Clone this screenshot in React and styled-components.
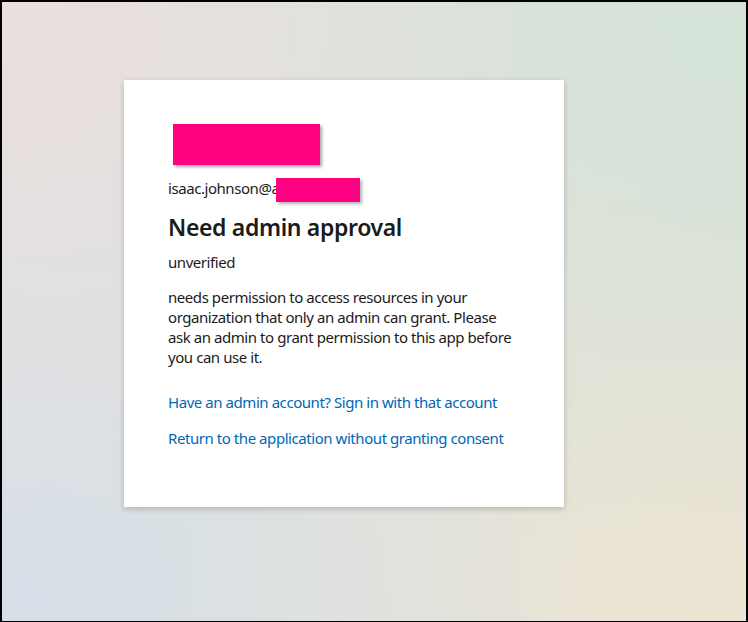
import React from 'react'
import styled, { createGlobalStyle } from 'styled-components'

const GlobalStyle = createGlobalStyle`
    * { box-sizing: border-box; }
    body {
        margin: 0;
        font-family: "Noto Sans", "Open Sans", sans-serif;
    }`

function App() {
  return (
    <>
    <GlobalStyle />
    <Page>
        <Card>
            <Logo />
            <Account>
                isaac.johnson@a<Redact />
            </Account>
            <Title>Need admin approval</Title>
            <Publisher>unverified</Publisher>
            <Message>
                needs permission to access resources in your organization that only an admin can grant. Please ask an admin to grant permission to this app before you can use it.
            </Message>
            <Links>
                <Link href="#">Have an admin account? Sign in with that account</Link>
                <Link href="#">Return to the application without granting consent</Link>
            </Links>
        </Card>
    </Page>
    </>
  )
}

const Page = styled.div`
    width: 748px;
    height: 622px;
    border: 2px solid #000;
    border-bottom-width: 1px;
    padding: 78px 0 0 122px;
    background:
        radial-gradient(circle at 0% 0%, #e9dfdf 0%, rgba(233,223,223,0) 55%),
        radial-gradient(circle at 100% 0%, #d4e2d8 0%, rgba(212,226,216,0) 60%),
        radial-gradient(circle at 0% 100%, #d6dfe8 0%, rgba(214,223,232,0) 60%),
        radial-gradient(circle at 100% 100%, #ede4d2 0%, rgba(237,228,210,0) 60%),
        #e0e2dc;`

const Card = styled.div`
    width: 440px;
    height: 427px;
    background: #fff;
    padding: 44px;
    box-shadow: 0 2px 6px rgba(0, 0, 0, 0.2);
    color: #1b1b1b;
    font-size: 15px;
    letter-spacing: -0.44px;`

const Logo = styled.div`
    width: 147px;
    height: 41px;
    margin-left: 5px;
    background: #ff0080;
    box-shadow: 2px 2px 3px rgba(0, 0, 0, 0.35);`

const Account = styled.div`
    margin-top: 11px;
    line-height: 24px;
    height: 24px;
    white-space: nowrap;`

const Redact = styled.span`
    display: inline-block;
    position: relative;
    top: 2px;
    width: 84px;
    height: 24px;
    margin-left: -3px;
    vertical-align: top;
    background: #ff0080;
    box-shadow: 2px 2px 3px rgba(0, 0, 0, 0.3);`

const Title = styled.h1`
    margin: 11px 0 0;
    font-size: 23px;
    letter-spacing: -0.35px;
    line-height: 32px;
    font-weight: 600;`

const Publisher = styled.div`
    margin-top: 9px;
    line-height: 20px;`

const Message = styled.p`
    margin: 15px 0 0;
    line-height: 20px;
    width: 352px;`

const Links = styled.div`
    margin-top: 25px;
    display: flex;
    flex-direction: column;
    gap: 16px;`

const Link = styled.a`
    color: #0067b8;
    line-height: 20px;
    text-decoration: none;`

export default App
